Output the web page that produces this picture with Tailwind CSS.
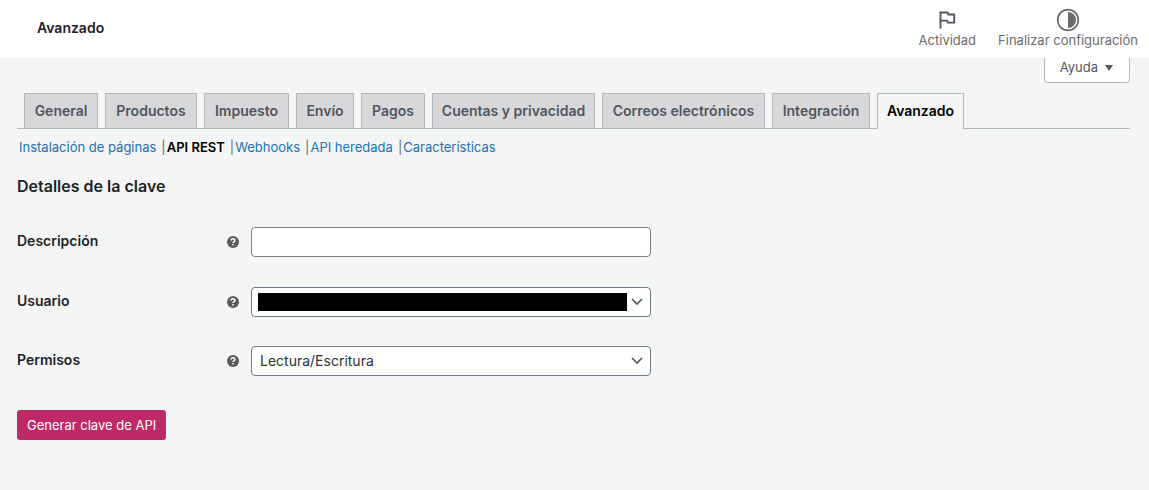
<!DOCTYPE html>
<html lang="es">
<head>
<meta charset="utf-8">
<meta name="viewport" content="width=device-width, initial-scale=1">
<title>Avanzado</title>
<script src="https://cdn.jsdelivr.net/npm/@tailwindcss/browser@4"></script>
</head>
<body class="min-h-screen bg-[#f4f6f6] font-['Inter',sans-serif] text-[#1d2327]">
<header class="flex h-[58px] items-center justify-between bg-white pr-[11px] pb-[2px] pl-[37px]">
  <h1 class="text-sm font-semibold">Avanzado</h1>
  <div class="flex gap-[22px] text-[13px] leading-4 text-[#6b6b6b]">
    <button type="button" class="flex flex-col items-center">
      <svg class="size-6" viewBox="0 0 24 24" fill="none" stroke="#50575e" stroke-width="1.9"><path d="M5.5 20.5V4.5H12.5L13.3 6.5H19.2V14.6H12.8L12 12.6H5.5"/></svg>
      <span>Actividad</span>
    </button>
    <button type="button" class="flex flex-col items-center">
      <svg class="size-6" viewBox="0 0 24 24"><circle cx="12" cy="12" r="10.3" fill="none" stroke="#6b6b6b" stroke-width="1.7"/><path d="M12 4a8 8 0 0 1 0 16z" fill="#6b6b6b"/></svg>
      <span>Finalizar configuración</span>
    </button>
  </div>
</header>
<main class="pr-[19px] pl-[17px]">
  <div class="flex justify-end">
    <button type="button" class="flex h-[25px] items-center gap-[7px] rounded-b border border-t-0 border-[#b4b9be] bg-white pr-4 pl-[15px] pb-1 text-[13px] text-[#50575e]">Ayuda
      <svg class="h-[6px] w-2" viewBox="0 0 8 6"><path d="M0 0H8L4 6Z" fill="#50575e"/></svg>
    </button>
  </div>
  <nav aria-label="Secciones" class="mt-[10px] flex gap-[7px] border-b border-[#b4b9be] pl-[7px] text-center text-sm leading-[24px] font-semibold whitespace-nowrap text-[#50575e] *:border *:border-b-0 *:border-[#b4b9be] *:pt-[5px] *:pb-[5px]">
    <a href="#general" class="w-[74px] bg-[#d8d8da]">General</a>
    <a href="#productos" class="w-[92px] bg-[#d8d8da]">Productos</a>
    <a href="#impuesto" class="w-[85px] bg-[#d8d8da]">Impuesto</a>
    <a href="#envio" class="w-[58px] bg-[#d8d8da]">Envío</a>
    <a href="#pagos" class="w-[64px] bg-[#d8d8da]">Pagos</a>
    <a href="#cuentas" class="w-[163px] bg-[#d8d8da]">Cuentas y privacidad</a>
    <a href="#correos" class="w-[163px] bg-[#d8d8da]">Correos electrónicos</a>
    <a href="#integracion" class="w-[98px] bg-[#d8d8da]">Integración</a>
    <a href="#avanzado" aria-current="page" class="-mb-px w-[87px] bg-[#f4f6f6] text-black">Avanzado</a>
  </nav>
  <ul class="mt-[7px] flex pl-[2px] text-[13px] leading-[22px] text-[#646970]">
    <li><a href="#paginas" class="text-[#2271b1]">Instalación de páginas</a><span class="pr-px pl-[5px]">|</span></li>
    <li><a href="#rest" class="font-semibold text-black">API REST</a><span class="pr-px pl-[5px]">|</span></li>
    <li><a href="#webhooks" class="text-[#2271b1]">Webhooks</a><span class="pr-px pl-[5px]">|</span></li>
    <li><a href="#heredada" class="text-[#2271b1]">API heredada</a><span class="pr-px pl-[5px]">|</span></li>
    <li><a href="#caracteristicas" class="text-[#2271b1]">Características</a></li>
  </ul>
  <h2 class="mt-[17px] text-base leading-[22px] font-semibold">Detalles de la clave</h2>
  <form class="mt-[30px]">
    <div class="flex flex-col gap-[30px]">
      <div class="flex items-center">
        <label for="descripcion" class="w-[210px] pb-[2px] text-sm font-semibold">Descripción</label>
        <svg class="mr-3 size-3" viewBox="0 0 12 12" role="img" aria-label="Ayuda"><circle cx="6" cy="6" r="6" fill="#5c5c5c"/><path d="M4.1 4.6C4.1 2.2 8 2.2 7.9 4.5C7.9 5.6 6 5.7 6 7.1M6 7.9V9.5" fill="none" stroke="#fff" stroke-width="1.5"/></svg>
        <input id="descripcion" type="text" class="h-[30px] w-[400px] rounded border border-[#7e8287] bg-white px-2 text-sm">
      </div>
      <div class="flex items-center">
        <label for="usuario" class="w-[210px] pb-[2px] text-sm font-semibold">Usuario</label>
        <svg class="mr-3 size-3" viewBox="0 0 12 12" role="img" aria-label="Ayuda"><circle cx="6" cy="6" r="6" fill="#5c5c5c"/><path d="M4.1 4.6C4.1 2.2 8 2.2 7.9 4.5C7.9 5.6 6 5.7 6 7.1M6 7.9V9.5" fill="none" stroke="#fff" stroke-width="1.5"/></svg>
        <div class="relative w-[400px]">
          <select id="usuario" class="block h-[30px] w-full appearance-none rounded border border-[#6f7a87] bg-white px-2 text-sm"><option></option></select>
          <span class="pointer-events-none absolute inset-y-[6px] right-6 left-[7px] bg-black"></span>
          <svg class="pointer-events-none absolute top-[11px] right-2 h-2 w-3" viewBox="0 0 12 8" fill="none" stroke="#50575e" stroke-width="1.6"><path d="M1 1L6 6L11 1"/></svg>
        </div>
      </div>
      <div class="-mt-px flex items-center">
        <label for="permisos" class="w-[210px] pb-[2px] text-sm font-semibold">Permisos</label>
        <svg class="mr-3 size-3" viewBox="0 0 12 12" role="img" aria-label="Ayuda"><circle cx="6" cy="6" r="6" fill="#5c5c5c"/><path d="M4.1 4.6C4.1 2.2 8 2.2 7.9 4.5C7.9 5.6 6 5.7 6 7.1M6 7.9V9.5" fill="none" stroke="#fff" stroke-width="1.5"/></svg>
        <div class="relative w-[400px]">
          <select id="permisos" class="block h-[30px] w-full appearance-none rounded border border-[#6f7a87] bg-white px-2 text-sm text-[#2c3338]"><option>Lectura/Escritura</option></select>
          <svg class="pointer-events-none absolute top-[11px] right-2 h-2 w-3" viewBox="0 0 12 8" fill="none" stroke="#50575e" stroke-width="1.6"><path d="M1 1L6 6L11 1"/></svg>
        </div>
      </div>
    </div>
    <button type="button" class="mt-[34px] h-[30px] rounded-[3px] bg-[#bf2a66] px-[10px] pt-[2px] text-[13px] text-white">Generar clave de API</button>
  </form>
</main>
</body>
</html>
